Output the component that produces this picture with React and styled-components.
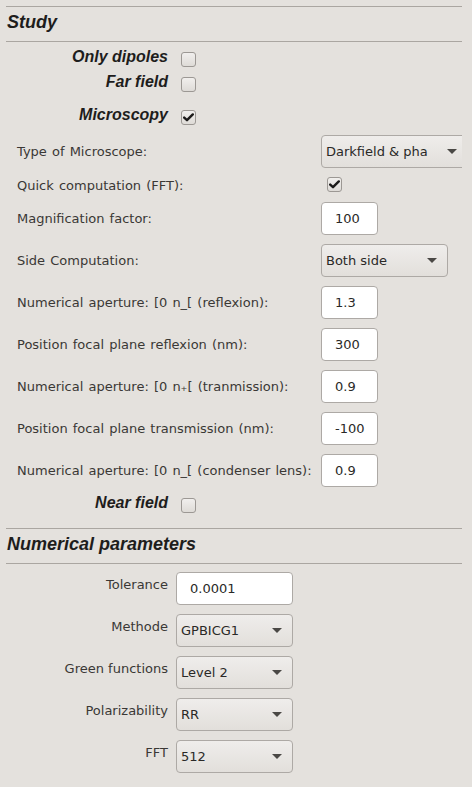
import React, { useState } from 'react';
import styled, { createGlobalStyle } from 'styled-components';

const GlobalStyle = createGlobalStyle`
  html, body {
    margin: 0;
    padding: 0;
    background: #e4e1dd;
  }
  body {
    font-family: "DejaVu Sans", sans-serif;
    font-size: 13px;
    color: #3a3835;
  }
`;

const Page = styled.div`
  width: 456px;
  padding: 6px 10px 14px 6px;
`;

const Divider = styled.div`
  height: 1px;
  background: #aaa6a1;
  margin-top: ${p => p.$top || 0}px;
`;

const SectionTitle = styled.h2`
  margin: 0;
  height: 34px;
  box-sizing: border-box;
  padding: 0 0 4px 1px;
  line-height: 30px;
  font-family: "Liberation Sans", Arial, sans-serif;
  font-size: 18px;
  font-weight: bold;
  font-style: italic;
  color: #1e1d1c;
`;

const CheckRow = styled.div`
  display: flex;
  align-items: center;
  height: 25px;
  margin-top: ${p => p.$top || 0}px;
`;

const CheckLabel = styled.span`
  width: 162px;
  text-align: right;
  margin-right: 13px;
  margin-bottom: 6px;
  line-height: 20px;
  font-family: "Liberation Sans", Arial, sans-serif;
  font-size: 16px;
  font-weight: bold;
  font-style: italic;
  color: #1e1d1c;
`;

const Box = styled.span`
  display: inline-flex;
  align-items: center;
  justify-content: center;
  width: 15px;
  height: 15px;
  box-sizing: border-box;
  border: 1px solid #9c9894;
  border-radius: 3px;
  background: linear-gradient(#f1efed, #dedbd7);
  cursor: pointer;
`;

const FormGrid = styled.div`
  display: grid;
  grid-template-columns: ${p => p.$labelWidth}px 1fr;
  column-gap: 8px;
  row-gap: 9px;
  margin-top: ${p => p.$top || 0}px;
  padding-left: ${p => p.$indent || 0}px;
  align-items: center;
  overflow: hidden;
`;

const FieldLabel = styled.label`
  line-height: 15px;
  white-space: nowrap;
  word-spacing: ${p => p.$right ? 0 : 1}px;
  text-align: ${p => p.$right ? 'right' : 'left'};
  align-self: ${p => p.$right ? 'start' : 'center'};
  padding-top: ${p => p.$right ? 5 : 0}px;
`;

const TextInput = styled.input`
  width: ${p => p.$width}px;
  height: 33px;
  box-sizing: border-box;
  padding: 0 0 0 13px;
  border: 1px solid #ada9a5;
  border-radius: 4px;
  background: #ffffff;
  font-family: "DejaVu Sans", sans-serif;
  font-size: 13px;
  color: #2a2927;
  outline: none;
`;

const Select = styled.div`
  display: flex;
  align-items: center;
  justify-content: space-between;
  flex: none;
  width: ${p => p.$width}px;
  height: 33px;
  box-sizing: border-box;
  padding: 0 10px 0 4px;
  border: 1px solid #ada9a5;
  border-radius: 4px;
  background: linear-gradient(#efedeb, #e2dfdb);
  color: #2a2927;
  white-space: nowrap;
  cursor: pointer;
`;

const SelectText = styled.span`
  line-height: 15px;
`;

const Arrow = styled.span`
  flex: none;
  width: 0;
  height: 0;
  margin-left: 8px;
  border-left: 5px solid transparent;
  border-right: 5px solid transparent;
  border-top: 5px solid #4a4845;
`;

const CheckCell = styled.div`
  height: 16px;
  display: flex;
  align-items: flex-start;
  padding-left: 6px;
`;

function CheckBox({ checked, onToggle }) {
  return (
    <Box onClick={onToggle}>
      {checked && (
        <svg width="11" height="9" viewBox="0 0 11 9">
          <path d="M1.2 4.6 L4 7.2 L9.8 1.4" fill="none" stroke="#1c1b1a" strokeWidth="2.4" strokeLinecap="round" strokeLinejoin="round" />
        </svg>
      )}
    </Box>
  );
}

function Dropdown({ value, width }) {
  return (
    <Select $width={width}>
      <SelectText>{value}</SelectText>
      <Arrow />
    </Select>
  );
}

const App = () => {
  const [flags, setFlags] = useState({
    dipoles: false,
    far: false,
    microscopy: true,
    fft: true,
    near: false
  });
  const toggle = key => () => setFlags(f => ({ ...f, [key]: !f[key] }));

  return (
    <Page>
      <GlobalStyle />
      <Divider />
      <SectionTitle>Study</SectionTitle>
      <Divider />

      <CheckRow $top={5}>
        <CheckLabel>Only dipoles</CheckLabel>
        <CheckBox checked={flags.dipoles} onToggle={toggle('dipoles')} />
      </CheckRow>
      <CheckRow>
        <CheckLabel>Far field</CheckLabel>
        <CheckBox checked={flags.far} onToggle={toggle('far')} />
      </CheckRow>
      <CheckRow $top={8}>
        <CheckLabel>Microscopy</CheckLabel>
        <CheckBox checked={flags.microscopy} onToggle={toggle('microscopy')} />
      </CheckRow>

      <FormGrid $top={5} $indent={11} $labelWidth={296}>
        <FieldLabel>Type of Microscope:</FieldLabel>
        <Dropdown value="Darkfield & pha" width={147} />

        <FieldLabel>Quick computation (FFT):</FieldLabel>
        <CheckCell>
          <CheckBox checked={flags.fft} onToggle={toggle('fft')} />
        </CheckCell>

        <FieldLabel>Magnification factor:</FieldLabel>
        <TextInput $width={57} defaultValue="100" />

        <FieldLabel>Side Computation:</FieldLabel>
        <Dropdown value="Both side" width={127} />

        <FieldLabel>Numerical aperture: [0 n_[ (reflexion):</FieldLabel>
        <TextInput $width={57} defaultValue="1.3" />

        <FieldLabel>Position focal plane reflexion (nm):</FieldLabel>
        <TextInput $width={57} defaultValue="300" />

        <FieldLabel>Numerical aperture: [0 n₊[ (tranmission):</FieldLabel>
        <TextInput $width={57} defaultValue="0.9" />

        <FieldLabel>Position focal plane transmission (nm):</FieldLabel>
        <TextInput $width={57} defaultValue="-100" />

        <FieldLabel>Numerical aperture: [0 n_[ (condenser lens):</FieldLabel>
        <TextInput $width={57} defaultValue="0.9" />
      </FormGrid>

      <CheckRow $top={6}>
        <CheckLabel>Near field</CheckLabel>
        <CheckBox checked={flags.near} onToggle={toggle('near')} />
      </CheckRow>

      <Divider $top={10} />
      <SectionTitle>Numerical parameters</SectionTitle>
      <Divider />

      <FormGrid $top={8} $labelWidth={162}>
        <FieldLabel $right>Tolerance</FieldLabel>
        <TextInput $width={117} defaultValue="0.0001" />

        <FieldLabel $right>Methode</FieldLabel>
        <Dropdown value="GPBICG1" width={117} />

        <FieldLabel $right>Green functions</FieldLabel>
        <Dropdown value="Level 2" width={117} />

        <FieldLabel $right>Polarizability</FieldLabel>
        <Dropdown value="RR" width={117} />

        <FieldLabel $right>FFT</FieldLabel>
        <Dropdown value="512" width={117} />
      </FormGrid>
    </Page>
  );
};

export default App;
